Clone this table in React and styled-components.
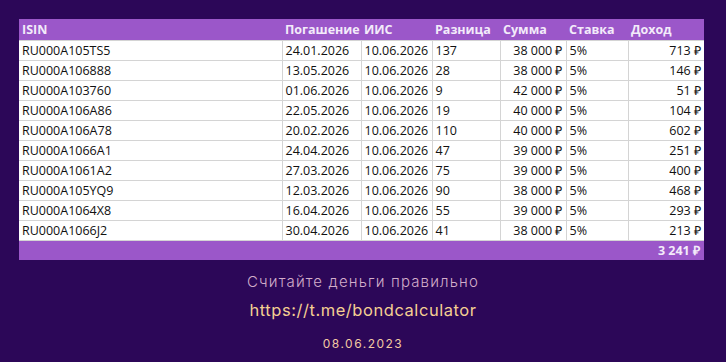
import React from "react";
import styled, { createGlobalStyle } from "styled-components";

const GlobalStyle = createGlobalStyle`
  html, body {
    margin: 0;
    padding: 0;
    background: #2c0758;
  }
`;

const bonds = [
  { isin: "RU000A105TS5", end: "24.01.2026", iis: "10.06.2026", diff: 137, sum: "38 000 ₽", rate: "5%", income: "713 ₽" },
  { isin: "RU000A106888", end: "13.05.2026", iis: "10.06.2026", diff: 28, sum: "38 000 ₽", rate: "5%", income: "146 ₽" },
  { isin: "RU000A103760", end: "01.06.2026", iis: "10.06.2026", diff: 9, sum: "42 000 ₽", rate: "5%", income: "51 ₽" },
  { isin: "RU000A106A86", end: "22.05.2026", iis: "10.06.2026", diff: 19, sum: "40 000 ₽", rate: "5%", income: "104 ₽" },
  { isin: "RU000A106A78", end: "20.02.2026", iis: "10.06.2026", diff: 110, sum: "40 000 ₽", rate: "5%", income: "602 ₽" },
  { isin: "RU000A1066A1", end: "24.04.2026", iis: "10.06.2026", diff: 47, sum: "39 000 ₽", rate: "5%", income: "251 ₽" },
  { isin: "RU000A1061A2", end: "27.03.2026", iis: "10.06.2026", diff: 75, sum: "39 000 ₽", rate: "5%", income: "400 ₽" },
  { isin: "RU000A105YQ9", end: "12.03.2026", iis: "10.06.2026", diff: 90, sum: "38 000 ₽", rate: "5%", income: "468 ₽" },
  { isin: "RU000A1064X8", end: "16.04.2026", iis: "10.06.2026", diff: 55, sum: "39 000 ₽", rate: "5%", income: "293 ₽" },
  { isin: "RU000A1066J2", end: "30.04.2026", iis: "10.06.2026", diff: 41, sum: "38 000 ₽", rate: "5%", income: "213 ₽" },
];

export default function App() {
  return (
    <>
      <GlobalStyle />
      <Page>
        <Sheet>
          <colgroup>
            <col style={{ width: 263 }} />
            <col style={{ width: 79 }} />
            <col style={{ width: 71 }} />
            <col style={{ width: 68 }} />
            <col style={{ width: 66 }} />
            <col style={{ width: 62 }} />
            <col style={{ width: 76 }} />
          </colgroup>
          <thead>
            <tr>
              <Head>ISIN</Head>
              <Head>Погашение</Head>
              <Head>ИИС</Head>
              <Head>Разница</Head>
              <Head>Сумма</Head>
              <Head>Ставка</Head>
              <Head>Доход</Head>
            </tr>
          </thead>
          <tbody>
            {bonds.map((b) => (
              <tr key={b.isin}>
                <Cell>{b.isin}</Cell>
                <Cell>{b.end}</Cell>
                <Cell>{b.iis}</Cell>
                <Cell>{b.diff}</Cell>
                <Cell $right>{b.sum}</Cell>
                <Cell>{b.rate}</Cell>
                <Cell $right>{b.income}</Cell>
              </tr>
            ))}
          </tbody>
          <tfoot>
            <tr>
              <Total colSpan={7}>3 241 ₽</Total>
            </tr>
          </tfoot>
        </Sheet>

        <Footer>
          <Slogan>Считайте деньги правильно</Slogan>
          <Link>https://t.me/bondcalculator</Link>
          <DateLine>08.06.2023</DateLine>
        </Footer>
      </Page>
    </>
  );
}

const Page = styled.div`
  width: 726px;
  height: 362px;
  box-sizing: border-box;
  padding: 19px 0 0 19px;
  overflow: hidden;
`;

const Sheet = styled.table`
  border-collapse: collapse;
  table-layout: fixed;
  width: 685px;
  font-family: "Open Sans", "Liberation Sans", sans-serif;
  font-size: 12.5px;
  color: #111;
`;

const Head = styled.th`
  background: #9b57c9;
  color: #f3ebfa;
  font-weight: 700;
  text-align: left;
  height: 21px;
  padding: 0 3px;
  box-sizing: border-box;
  white-space: nowrap;
`;

const Cell = styled.td`
  background: #fff;
  border: 1px solid #d4d4d4;
  height: 20px;
  padding: 0 3px;
  box-sizing: border-box;
  white-space: nowrap;
  text-align: ${(p) => (p.$right ? "right" : "left")};
  &:first-child { border-left: none; }
  &:last-child { border-right: none; }
`;

const Total = styled.td`
  background: #9b57c9;
  color: #f3ebfa;
  font-weight: 700;
  text-align: right;
  height: 20px;
  padding: 0 4px;
  box-sizing: border-box;
`;

const Footer = styled.div`
  width: 688px;
  display: flex;
  flex-direction: column;
  align-items: center;
  margin-top: 12px;
  font-family: Inter, "Noto Sans", sans-serif;
`;

const Slogan = styled.div`
  color: #d3adca;
  font-size: 15px;
  font-weight: 300;
  line-height: 20px;
  letter-spacing: 1.15px;
`;

const Link = styled.div`
  color: #f4cf92;
  font-size: 16.5px;
  font-weight: 400;
  line-height: 22px;
  letter-spacing: 0.55px;
  margin-top: 7px;
`;

const DateLine = styled.div`
  color: #f2c9a3;
  font-size: 12px;
  line-height: 16px;
  letter-spacing: 1.5px;
  margin-top: 15px;
`;
